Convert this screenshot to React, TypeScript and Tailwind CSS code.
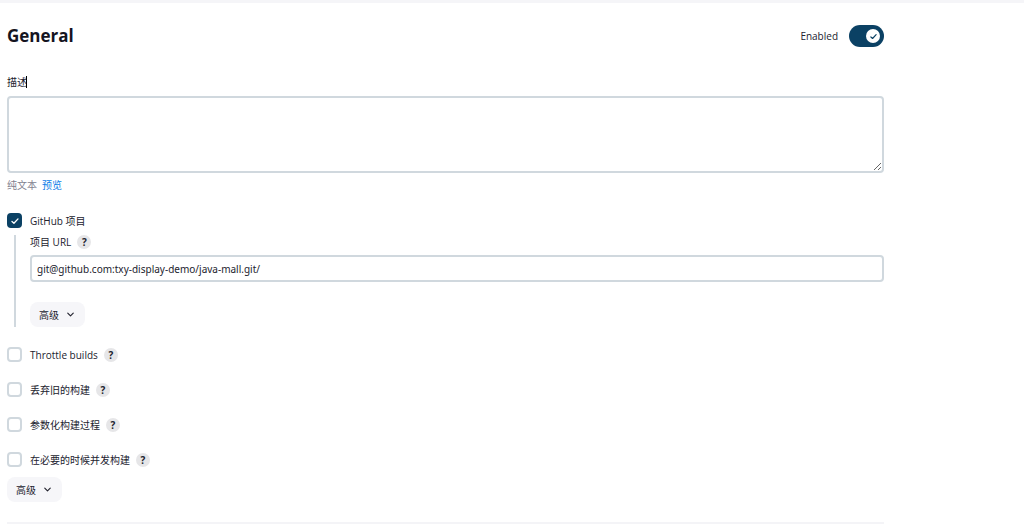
import { useState } from 'react'
import { ChevronDown } from 'lucide-react'

interface Option {
  id: string
  label: string
}

const options: Option[] = [
  { id: 'throttle', label: 'Throttle builds' },
  { id: 'discard', label: '丢弃旧的构建' },
  { id: 'params', label: '参数化构建过程' },
  { id: 'concurrent', label: '在必要的时候并发构建' }
]

function CheckMark({ className }: { className: string }) {
  return (
    <svg
      viewBox="0 0 12 12"
      fill="none"
      stroke="currentColor"
      strokeLinecap="round"
      strokeLinejoin="round"
      className={className}
    >
      <path d="M1.5 6.8 4.4 9.4 10.5 2.8" strokeWidth="2" />
    </svg>
  )
}

function HelpButton({ label }: { label: string }) {
  return (
    <button
      type="button"
      aria-label={`Help: ${label}`}
      className="flex size-3.5 shrink-0 items-center justify-center rounded-full bg-[#e6e6e8] text-[10px] leading-none font-bold"
    >
      ?
    </button>
  )
}

function AdvancedButton() {
  return (
    <button
      type="button"
      className="flex h-[25px] items-center gap-1.5 rounded-lg bg-[#f6f6f9] px-[9px]"
    >
      高级
      <ChevronDown className="size-[11px]" strokeWidth={2.5} />
    </button>
  )
}

function CheckboxRow({
  id,
  label,
  help = true,
  defaultChecked = false
}: Option & { help?: boolean; defaultChecked?: boolean }) {
  return (
    <div className="flex h-[15px] items-center gap-1.5">
      <label htmlFor={id} className="flex h-[15px] items-center gap-2">
        <span className="grid place-items-center">
          <input
            id={id}
            type="checkbox"
            defaultChecked={defaultChecked}
            className="peer col-start-1 row-start-1 size-[15px] appearance-none rounded-[4px] border-2 border-[#d0d8de] bg-white checked:border-[#0b4164] checked:bg-[#0b4164]"
          />
          <CheckMark className="pointer-events-none col-start-1 row-start-1 hidden size-2 text-white peer-checked:block" />
        </span>
        {label}
      </label>
      {help && <HelpButton label={label} />}
    </div>
  )
}

export default function App() {
  const [enabled, setEnabled] = useState(true)

  return (
    <div className="bg-white font-['Open_Sans','Noto_Sans_CJK_SC',sans-serif] text-[10px] leading-4 text-[#22222e]">
      <div className="h-[3px] bg-[#f5f5f8]" />

      <main className="max-w-[884px] pl-[7px]">
        {/* Section header */}
        <div className="mt-[22px] flex h-[22px] items-center justify-between">
          <h1 className="text-[17px] leading-5 font-bold text-[#14141f]">General</h1>
          <label className="flex items-center gap-[11px]">
            Enabled
            <input
              type="checkbox"
              role="switch"
              checked={enabled}
              onChange={(e) => setEnabled(e.target.checked)}
              className="sr-only"
            />
            <span
              className={
                enabled
                  ? 'flex h-[22px] w-[35px] items-center justify-end rounded-full bg-[#0b4164] px-1'
                  : 'flex h-[22px] w-[35px] items-center justify-start rounded-full bg-[#c9d2d9] px-1'
              }
            >
              <span className="flex size-3.5 items-center justify-center rounded-full bg-white text-[#0b4164]">
                {enabled && <CheckMark className="size-[7px]" />}
              </span>
            </span>
          </label>
        </div>

        {/* Description */}
        <div className="mt-[27px] flex items-center">
          <label htmlFor="description">描述</label>
          <span className="-ml-px h-3 w-px bg-black" />
        </div>
        <textarea
          id="description"
          className="mt-1.5 block h-[77px] w-full resize-y rounded border-2 border-[#d0d8de] px-1.5 py-1 outline-none"
        />
        <div className="mt-1 flex gap-[5px]">
          <span className="text-[#82828f]">纯文本</span>
          <a href="#preview" className="text-[#0b7ce8]">
            预览
          </a>
        </div>

        {/* GitHub project */}
        <div className="mt-5">
          <CheckboxRow id="github" label="GitHub 项目" help={false} defaultChecked />
          <div className="mt-[7px] ml-[7px] border-l-2 border-[#d0d8de] pl-3.5">
            <div className="flex h-3.5 items-center gap-1.5">
              <label htmlFor="project-url">项目 URL</label>
              <HelpButton label="项目 URL" />
            </div>
            <input
              id="project-url"
              type="text"
              defaultValue="git@github.com:txy-display-demo/java-mall.git/"
              className="mt-1.5 mb-5 block h-[27px] w-full rounded border-2 border-[#d0d8de] px-[5px] font-['Noto_Sans',sans-serif] outline-none"
            />
            <AdvancedButton />
          </div>
        </div>

        {/* Build options */}
        <div className="mt-5 flex flex-col gap-5">
          {options.map((option) => (
            <CheckboxRow key={option.id} id={option.id} label={option.label} />
          ))}
        </div>
        <div className="mt-[10px]">
          <AdvancedButton />
        </div>

        <hr className="mt-5 border-t-2 border-[#f4f4f7]" />
      </main>
    </div>
  )
}
